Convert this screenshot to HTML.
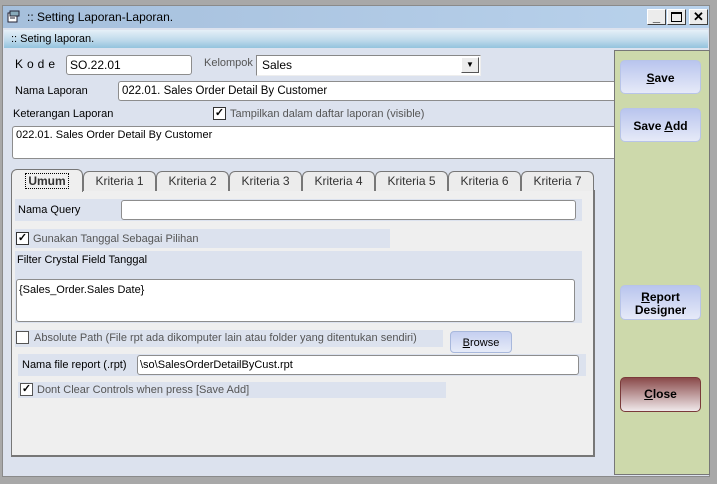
<!DOCTYPE html>
<html><head><meta charset="utf-8">
<style>
*{margin:0;padding:0;box-sizing:border-box}
body{width:717px;height:484px;background:#a8a8a8;font-family:"Liberation Sans",sans-serif;font-size:11px;color:#000;position:relative;overflow:hidden}
.a{position:absolute;white-space:nowrap}
.win{left:2px;top:5px;width:708px;height:472px;background:#dce2ee;border:1px solid #8a8a8a}
.title{left:3px;top:6px;width:706px;height:22px;background:linear-gradient(90deg,#a5bfdc,#b9d2ec);font-size:12px;line-height:22px;padding-left:24px}
.sub{left:4px;top:30px;width:704px;height:18px;background:linear-gradient(#e6f0f8,#bcd8ea 60%,#93c3dd);line-height:18px;padding-left:7px;font-size:11px}
.tb{top:9px;width:19px;height:16px;background:#ececec;border:1px solid;border-color:#fff #404040 #404040 #fff;font-weight:bold;font-size:13px;text-align:center;line-height:13px}
.inp{background:#fff;border:1px solid #8d8d8d;border-radius:3px;padding-left:3px;line-height:18px}
.band{background:#dce2ee}
.cb{width:13px;height:13px;border:1px solid #333;background:#fff;font-size:11px;line-height:11px;text-align:center;font-weight:bold}
.gray{color:#555}
.tab{top:171px;height:20px;background:#ececec;border:1px solid #777;border-bottom:none;border-radius:6px 6px 0 0;text-align:center;line-height:18px;color:#333;font-size:12px}
.btn{left:620px;width:81px;border:1px solid #b8c4e8;border-radius:5px;background:linear-gradient(#b9c5ee,#e6eaf8);font-weight:bold;text-align:center;font-size:12px}
</style></head><body>
<div class="a win"></div>
<div class="a title">:: Setting Laporan-Laporan.</div>
<svg class="a" style="left:7px;top:10px" width="14" height="14"><rect x="1" y="3" width="9" height="9" fill="#fff" stroke="#223"/><rect x="3" y="1" width="9" height="5" fill="#8ab" stroke="#223"/><line x1="3" y1="8" x2="8" y2="8" stroke="#223"/></svg>
<div class="a tb" style="left:647px">_</div>
<div class="a tb" style="left:667px"><div style="width:11px;height:10px;border:1px solid #000;border-top-width:2px;margin:2px auto"></div></div>
<div class="a tb" style="left:689px">✕</div>
<div class="a sub">:: Seting laporan.</div>

<div class="a" style="left:614px;top:50px;width:96px;height:425px;background:#cdd9ab;border:1px solid #777"></div>
<div class="a btn" style="top:60px;height:34px;line-height:34px"><u>S</u>ave</div>
<div class="a btn" style="top:108px;height:34px;line-height:34px">Save <u>A</u>dd</div>
<div class="a btn" style="top:285px;height:35px;line-height:13px;padding-top:5px"><u>R</u>eport<br>Designer</div>
<div class="a btn" style="top:377px;height:35px;line-height:33px;background:linear-gradient(#8a4a4a,#f0e8ea);border-color:#7a3a3a"><u>C</u>lose</div>

<div class="a" style="left:15px;top:57px;letter-spacing:4px;font-size:12px">Kode</div>
<div class="a inp" style="left:66px;top:55px;width:126px;height:20px;font-size:12px">SO.22.01</div>
<div class="a gray" style="left:204px;top:57px">Kelompok</div>
<div class="a" style="left:256px;top:55px;width:225px;height:21px;background:#fff;border:1px solid #888;border-right-color:#eee;border-bottom-color:#eee;padding-left:5px;line-height:19px;font-size:12px">Sales</div>
<div class="a" style="left:461px;top:57px;width:18px;height:16px;background:#ececec;border:1px solid;border-color:#fff #555 #555 #fff;font-size:8px;text-align:center;line-height:14px">▼</div>
<div class="a" style="left:15px;top:85px">Nama Laporan</div>
<div class="a inp" style="left:118px;top:81px;width:496px;height:20px;border-radius:3px 0 0 3px;border-right:none;font-size:11.5px">022.01. Sales Order Detail By Customer</div>
<div class="a" style="left:13px;top:108px">Keterangan Laporan</div>
<div class="a cb" style="left:213px;top:107px">✓</div>
<div class="a gray" style="left:230px;top:108px">Tampilkan dalam daftar laporan (visible)</div>
<div class="a inp" style="left:12px;top:126px;width:602px;height:33px;border-right:none;border-radius:3px 0 0 3px;line-height:16px">022.01. Sales Order Detail By Customer</div>

<div class="a" style="left:11px;top:190px;width:584px;height:267px;background:#efefef;border:1px solid #777;border-right:2px solid #777;border-bottom:2px solid #777"></div>
<div class="a tab" style="left:11px;top:169px;width:72px;height:23px;background:#efefef;font-weight:bold;font-size:12px;line-height:22px"><span style="border:1px dotted #000;padding:0 2px">Umum</span></div>
<div class="a tab" style="left:83px;width:73px">Kriteria 1</div>
<div class="a tab" style="left:156px;width:73px">Kriteria 2</div>
<div class="a tab" style="left:229px;width:73px">Kriteria 3</div>
<div class="a tab" style="left:302px;width:73px">Kriteria 4</div>
<div class="a tab" style="left:375px;width:73px">Kriteria 5</div>
<div class="a tab" style="left:448px;width:73px">Kriteria 6</div>
<div class="a tab" style="left:521px;width:73px">Kriteria 7</div>

<div class="a band" style="left:15px;top:199px;width:567px;height:22px"></div>
<div class="a" style="left:18px;top:204px">Nama Query</div>
<div class="a inp" style="left:121px;top:200px;width:455px;height:20px"></div>
<div class="a band" style="left:15px;top:229px;width:375px;height:19px"></div>
<div class="a cb" style="left:16px;top:232px">✓</div>
<div class="a gray" style="left:33px;top:233px">Gunakan Tanggal Sebagai Pilihan</div>
<div class="a band" style="left:15px;top:251px;width:567px;height:72px"></div>
<div class="a" style="left:17px;top:254px">Filter Crystal Field Tanggal</div>
<div class="a inp" style="left:16px;top:279px;width:559px;height:43px;line-height:16px;padding-top:2px;padding-left:2px">{Sales_Order.Sales Date}</div>
<div class="a band" style="left:15px;top:330px;width:428px;height:17px"></div>
<div class="a cb" style="left:16px;top:331px;border-color:#555"></div>
<div class="a gray" style="left:34px;top:332px">Absolute Path (File rpt ada dikomputer lain atau folder yang ditentukan sendiri)</div>
<div class="a" style="left:450px;top:331px;width:62px;height:22px;border:1px solid #a8b8dc;border-radius:4px;background:linear-gradient(#c5cff0,#e6ebf8);text-align:center;line-height:22px"><u>B</u>rowse</div>
<div class="a band" style="left:18px;top:354px;width:568px;height:22px"></div>
<div class="a" style="left:22px;top:359px">Nama file report (.rpt)</div>
<div class="a inp" style="left:137px;top:355px;width:442px;height:20px;padding-left:2px">\so\SalesOrderDetailByCust.rpt</div>
<div class="a band" style="left:18px;top:382px;width:428px;height:16px"></div>
<div class="a cb" style="left:20px;top:383px;border-color:#555">✓</div>
<div class="a gray" style="left:37px;top:384px">Dont Clear Controls when press [Save Add]</div>
</body></html>
